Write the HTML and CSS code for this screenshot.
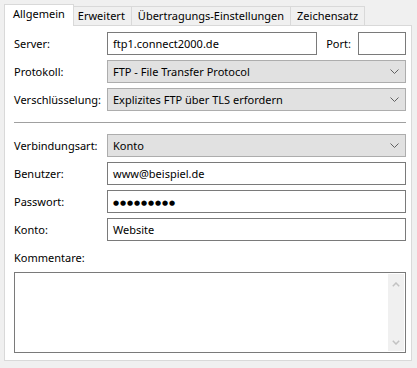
FILE: index.html
```html
<!DOCTYPE html>
<html lang="de">
<head>
    <meta charset="UTF-8">
    <title>Verbindung bearbeiten</title>
    <link rel="stylesheet" href="styles.css">
</head>
<body>

<div class="dialog">
    <div class="tabs">
        <div class="tab active">Allgemein</div>
        <div class="tab">Erweitert</div>
        <div class="tab">Übertragungs-Einstellungen</div>
        <div class="tab">Zeichensatz</div>
    </div>

    <div class="panel">
        <div class="row">
            <label>Server:</label>
            <div class="server-fields">
                <div class="field server">ftp1.connect2000.de</div>
                <label class="port-label">Port:</label>
                <div class="field port"></div>
            </div>
        </div>
        <div class="row">
            <label>Protokoll:</label>
            <div class="select">
                <span>FTP - File Transfer Protocol</span>
                <svg width="9" height="5" viewBox="0 0 9 5"><polyline points="0.5,0.5 4.5,4.5 8.5,0.5" fill="none" stroke="#606060"/></svg>
            </div>
        </div>
        <div class="row">
            <label>Verschlüsselung:</label>
            <div class="select">
                <span>Explizites FTP über TLS erfordern</span>
                <svg width="9" height="5" viewBox="0 0 9 5"><polyline points="0.5,0.5 4.5,4.5 8.5,0.5" fill="none" stroke="#606060"/></svg>
            </div>
        </div>

        <div class="separator"></div>

        <div class="row">
            <label>Verbindungsart:</label>
            <div class="select">
                <span>Konto</span>
                <svg width="9" height="5" viewBox="0 0 9 5"><polyline points="0.5,0.5 4.5,4.5 8.5,0.5" fill="none" stroke="#606060"/></svg>
            </div>
        </div>
        <div class="row">
            <label>Benutzer:</label>
            <div class="field">www@beispiel.de</div>
        </div>
        <div class="row">
            <label>Passwort:</label>
            <div class="field"><span class="dots">●●●●●●●●●</span></div>
        </div>
        <div class="row">
            <label>Konto:</label>
            <div class="field">Website</div>
        </div>

        <label class="comment-label">Kommentare:</label>
        <div class="textarea">
            <div class="scrollbar">
                <svg width="8" height="5" viewBox="0 0 8 5"><polyline points="0.8,4.2 4,1 7.2,4.2" fill="none" stroke="#c2c2c2" stroke-width="1.5"/></svg>
                <svg width="8" height="5" viewBox="0 0 8 5"><polyline points="0.8,0.8 4,4 7.2,0.8" fill="none" stroke="#c2c2c2" stroke-width="1.5"/></svg>
            </div>
        </div>
    </div>
</div>

</body>
</html>
```

FILE: styles.css
```css
* {
    box-sizing: border-box;
}

body {
    margin: 0;
    background-color: #f0f0f0;
    font-family: "Noto Sans", sans-serif;
    font-size: 11px;
    color: #000;
}

.dialog {
    width: 417px;
    height: 368px;
    padding: 4px 5px 0 4px;
}

.tabs {
    display: flex;
    align-items: flex-end;
    height: 21px;
}

.tab {
    height: 19px;
    line-height: 18px;
    padding: 0 6px;
    margin-left: -1px;
    border: 1px solid #d9d9d9;
    border-bottom: none;
    background-color: #f0f0f0;
    white-space: nowrap;
}

.tab:first-child {
    margin-left: 0;
}

.tab.active {
    height: 22px;
    padding: 0 8px 3px;
    margin-right: -2px;
    margin-bottom: -1px;
    background-color: #fff;
    position: relative;
    z-index: 1;
}

.panel {
    display: flex;
    flex-direction: column;
    gap: 5px;
    height: 336px;
    padding: 6px 5px 0 9px;
    background-color: #fff;
    border: 1px solid #d9d9d9;
}

.row {
    display: grid;
    grid-template-columns: 93px 1fr;
    align-items: center;
    height: 23px;
}

label {
    white-space: nowrap;
}

.field {
    height: 23px;
    padding: 0 5px;
    line-height: 21px;
    background-color: #fff;
    border: 1px solid #7a7a7a;
    white-space: nowrap;
    overflow: hidden;
}

.server-fields {
    display: flex;
    align-items: center;
}

.server {
    flex: 1;
}

.port-label {
    margin: 0 7px 0 9px;
}

.port {
    width: 48px;
}

.select {
    display: flex;
    align-items: center;
    justify-content: space-between;
    height: 23px;
    padding: 0 6px 0 5px;
    background-color: #e1e1e1;
    border: 1px solid #adadad;
}

.dots {
    font-family: "DejaVu Sans", sans-serif;
    font-size: 7px;
    letter-spacing: 0.9px;
    vertical-align: 1px;
}

.separator {
    height: 1px;
    margin: 6px 0;
    background-color: #a0a0a0;
}

.comment-label {
    line-height: 16px;
    margin: 4px 0 1px;
}

.textarea {
    display: flex;
    justify-content: flex-end;
    height: 81px;
    padding: 1px;
    background-color: #fff;
    border: 1px solid #7a7a7a;
}

.scrollbar {
    display: flex;
    flex-direction: column;
    align-items: center;
    justify-content: space-between;
    width: 16px;
    padding: 8px 0 6px;
    background-color: #f0f0f0;
}

.scrollbar svg {
    display: block;
}
```
